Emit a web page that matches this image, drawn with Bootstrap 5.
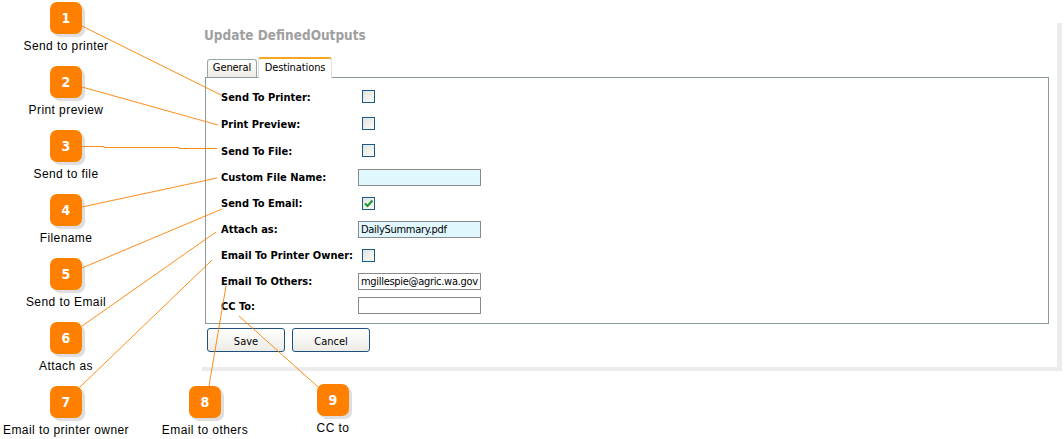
<!DOCTYPE html>
<html lang="en">
<head>
  <meta charset="UTF-8">
  <meta name="viewport" content="width=device-width, initial-scale=1">
  <title>Update DefinedOutputs</title>
  <link href="https://cdn.jsdelivr.net/npm/bootstrap@5.3.3/dist/css/bootstrap.min.css" rel="stylesheet">
  <style>
    html, body { margin: 0; background: #fff; overflow: hidden; }
    .stage { width: 1064px; height: 439px; }
    .lines { left: 0; top: 0; z-index: 5; pointer-events: none; }
    .node { width: 54px; margin-left: -11px; }
    .pin {
      width: 32px; height: 32px; background: #ff8000; border-radius: 7px; color: #fff;
      font: bold 14px/32px "DejaVu Sans Condensed", "DejaVu Sans", sans-serif; text-align: center;
      box-shadow: 3px 3px 0 #dedede;
    }
    .pin-text { font: 12px/14px "Liberation Sans", sans-serif; color: #000; white-space: nowrap; letter-spacing: .42px; margin-top: 5px; }
    .sheet {
      margin-left: 202px; margin-top: 23px; width: 860px; height: 348px;
      border-right: 5px solid #ececec; border-bottom: 4px solid #ececec;
      padding: 4px 8px 0 2px;
    }
    .sheet-title { font: bold 13.5px/16px "DejaVu Sans Condensed", "DejaVu Sans", sans-serif; color: #a0a0a0; margin: 0 0 13px; }
    .tabs { padding-left: 3px; height: 21px; border: 0; align-items: flex-end; gap: 1px; }
    .tabs .nav-link {
      font: 11px/14px "DejaVu Sans Condensed", "DejaVu Sans", sans-serif; color: #000; padding: 0; text-align: center;
      border: 1px solid #9aa8a8; border-bottom: 0; border-radius: 3px 3px 0 0;
      background: linear-gradient(#fff, #ecebe4); height: 18px; width: 50px; margin: 0; padding-top: 1px;
      letter-spacing: -.1px;
    }
    .tabs .nav-link.active {
      width: 74px; height: 21px; background: #fff; border-top: 2px solid #f5a623; padding-top: 2px;
      margin-bottom: -1px; position: relative; z-index: 1; color: #000;
    }
    .fields { border: 1px solid #8b9b9b; margin-left: 1px; width: 844px; height: 247px; padding: 5px 0 0 15px; margin-bottom: 4px; }
    .field { height: 26px; }
    .field:nth-child(-n+3) { height: 27px; }
    .field:last-child { height: 23px; }
    .field label { width: 137px; margin-top: 2px; font: bold 11px/14px "DejaVu Sans Condensed", "DejaVu Sans", sans-serif; color: #000; flex: none; white-space: nowrap; }
    .txt {
      width: 123px; height: 17px; padding: 0 2px; border: 1px solid #8a8a8a; border-radius: 0;
      font: 11px/15px "DejaVu Sans Condensed", "DejaVu Sans", sans-serif; letter-spacing: -.3px; color: #000; background: #fff; min-height: 0; flex: none;
    }
    .txt.req { background: #e0f7fd; }
    .chk {
      width: 13px; height: 13px; margin-left: 4px; border: 1px solid #1a5a8c; flex: none;
      background: linear-gradient(135deg, #e2e2dc, #fcfcfa);
    }
    .chk svg { display: block; }
    .acts { padding-left: 3px; gap: 7px; }
    .acts .btn {
      width: 78px; height: 24px; padding: 3px 0 0; border: 1px solid #1c5180; border-radius: 3px;
      background: linear-gradient(#fff, #ecebe5); color: #000; font: 11px/19px "DejaVu Sans Condensed", "DejaVu Sans", sans-serif;
    }
  </style>
</head>
<body>

<div class="stage position-relative">

  <div class="sheet position-absolute">
    <h1 class="sheet-title">Update DefinedOutputs</h1>
    <ul class="nav nav-tabs tabs">
      <li class="nav-item"><a class="nav-link" href="#">General</a></li>
      <li class="nav-item"><a class="nav-link active" href="#">Destinations</a></li>
    </ul>
    <form>
      <div class="fields">
        <div class="field d-flex align-items-center"><label>Send To Printer:</label><span class="chk"></span></div>
        <div class="field d-flex align-items-center"><label>Print Preview:</label><span class="chk"></span></div>
        <div class="field d-flex align-items-center"><label>Send To File:</label><span class="chk"></span></div>
        <div class="field d-flex align-items-center"><label>Custom File Name:</label><input class="form-control txt req" type="text"></div>
        <div class="field d-flex align-items-center"><label>Send To Email:</label>
          <span class="chk"><svg width="11" height="11" viewBox="0 0 11 11"><path d="M2 5.5 L4.5 8 L9.5 2.5" fill="none" stroke="#1f9a2c" stroke-width="2.2"/></svg></span>
        </div>
        <div class="field d-flex align-items-center"><label>Attach as:</label><input class="form-control txt req" type="text" value="DailySummary.pdf"></div>
        <div class="field d-flex align-items-center"><label>Email To Printer Owner:</label><span class="chk"></span></div>
        <div class="field d-flex align-items-center"><label>Email To Others:</label><input class="form-control txt" type="text" value="mgillespie@agric.wa.gov"></div>
        <div class="field d-flex align-items-center"><label>CC To:</label><input class="form-control txt" type="text"></div>
      </div>
      <div class="acts d-flex">
        <button type="button" class="btn">Save</button>
        <button type="button" class="btn">Cancel</button>
      </div>
    </form>
  </div>

  <svg class="lines position-absolute" width="1064" height="439" fill="none" stroke="#ff8000" stroke-width="0.9">
    <path d="M82 26 L221 95"/>
    <path d="M82 87 L218 125"/>
    <path d="M82 146.5 H104 V147.5 H179 V148.5 H217"/>
    <path d="M82 207 L217 178"/>
    <path d="M82 268 L222 209"/>
    <path d="M82 326 L216 232"/>
    <path d="M80 387 L212 260"/>
    <path d="M209 386 L226 286"/>
    <path d="M318 387 L239 316"/>
  </svg>

  <div id="nodes"></div>
</div>

<script>
// callouts sit at free positions around the form
const callouts = [
  [50, 2, 'Send to printer'],
  [50, 66, 'Print preview'],
  [50, 130, 'Send to file'],
  [50, 194, 'Filename'],
  [50, 258, 'Send to Email'],
  [50, 322, 'Attach as'],
  [50, 386, 'Email to printer owner'],
  [189, 386, 'Email to others'],
  [317, 384, 'CC to']
];
document.getElementById('nodes').innerHTML = callouts.map((c, i) => `
  <div class="node position-absolute d-flex flex-column align-items-center" style="left:${c[0]}px;top:${c[1]}px">
    <div class="pin">${i + 1}</div>
    <div class="pin-text">${c[2]}</div>
  </div>`).join('');
</script>

<script src="https://cdn.jsdelivr.net/npm/bootstrap@5.3.3/dist/js/bootstrap.bundle.min.js"></script>
</body>
</html>
